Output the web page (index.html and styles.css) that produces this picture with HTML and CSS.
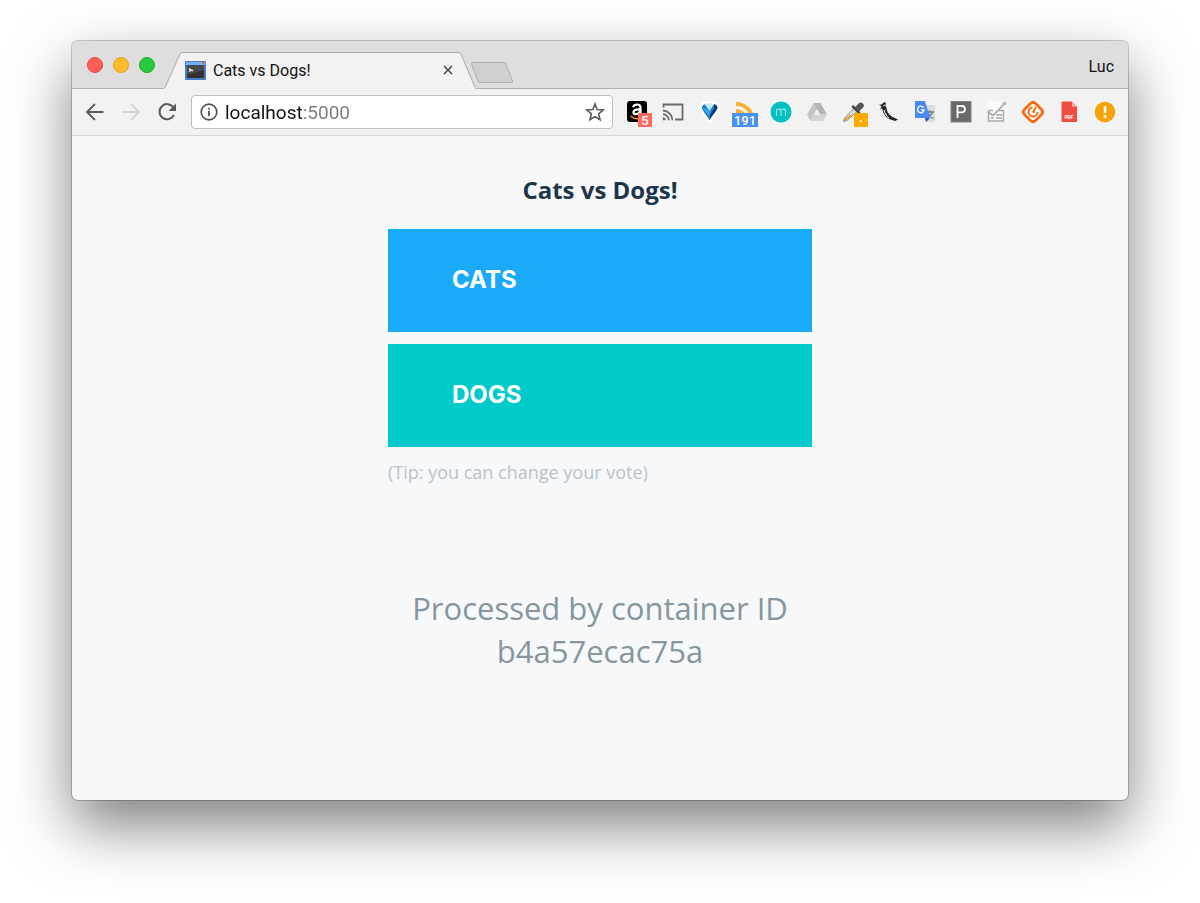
FILE: index.html
```
<!DOCTYPE html>
<html lang="en">
<head>
<meta charset="UTF-8">
<title>Cats vs Dogs!</title>
<link rel="stylesheet" href="styles.css">
</head>
<body>
<div class="window">
  <header class="tabstrip">
    <div class="lights">
      <button class="light red" aria-label="Close"></button>
      <button class="light yellow" aria-label="Minimize"></button>
      <button class="light green" aria-label="Zoom"></button>
    </div>
    <div class="tab">
      <svg class="tab-edge" width="18" height="37" viewBox="0 0 18 37"><path d="M0 37L16 2Q17 .5 18 .5V37z" fill="#f2f2f2"/><path d="M0 36.5L1 35.5L16 2Q17 .5 18 .5" fill="none" stroke="#a9a9a9"/></svg>
      <div class="tab-body">
        <svg width="21" height="19" viewBox="0 0 21 19"><rect width="21" height="19" rx="1" fill="#4b7cc9"/><rect x="1" y="1" width="19" height="3" fill="#78aef5"/><rect x="17" y="1" width="2" height="2" fill="#e8604c"/><rect x="2" y="4" width="17" height="13" fill="#303234"/><path d="M2 4h17v5L2 14z" fill="#46494b"/><path d="M4 7.500l2 1.500-2 1.500M6.500 9.500h1.500" fill="none" stroke="#fff" stroke-width="1.300"/></svg>
        <span class="tab-title">Cats vs Dogs!</span>
        <button class="tab-close" aria-label="Close tab"><svg width="10" height="10" viewBox="0 0 10 10"><path d="M1 1l8 8M9 1l-8 8" stroke="#444" stroke-width="1.500"/></svg></button>
      </div>
      <svg class="tab-edge" width="17" height="37" viewBox="0 0 17 37"><path d="M0 .5Q1 .5 2 2L17 37H0z" fill="#f2f2f2"/><path d="M0 .5Q1 .5 2 2L16 35.500Q16.500 36.500 17 36.500" fill="none" stroke="#a9a9a9"/></svg>
    </div>
    <button class="new-tab" aria-label="New tab"><svg width="44" height="22" viewBox="0 0 44 22"><path d="M2.500 .5H34Q35.500 .5 36 2L42.500 19Q43 20.500 41.500 20.500H10Q8.500 20.500 8 19L1.500 2Q1 .5 2.500 .5z" fill="#d0d0d0" stroke="#adadad"/></svg></button>
    <button class="profile">Luc</button>
  </header>

  <div class="toolbar">
    <button class="tool" aria-label="Back"><svg width="24" height="24" viewBox="0 0 24 24"><path d="M20.500 12H4.500M12 4l-8 8 8 8" fill="none" stroke="#5a5a5a" stroke-width="1.800"/></svg></button>
    <button class="tool" aria-label="Forward"><svg width="24" height="24" viewBox="0 0 24 24"><path d="M3.500 12h16M12 4l8 8-8 8" fill="none" stroke="#d2d2d2" stroke-width="1.800"/></svg></button>
    <button class="tool" aria-label="Reload"><svg width="24" height="24" viewBox="0 0 24 24"><path d="M19 15A7.600 7.600 0 1 1 18.500 7.500" fill="none" stroke="#5a5a5a" stroke-width="2"/><path d="M21 3.500v7.500h-7.500z" fill="#5a5a5a"/></svg></button>
    <div class="omnibox">
      <svg width="18" height="18" viewBox="0 0 18 18"><circle cx="9" cy="9" r="7.800" fill="none" stroke="#505050" stroke-width="1.700"/><path d="M9 7.800v5.200M9 4.700v1.800" stroke="#505050" stroke-width="1.800"/></svg>
      <input class="address" type="text" value="localhost:5000" aria-label="Address">
      <button class="star" aria-label="Bookmark"><svg width="20" height="20" viewBox="0 0 20 20"><path d="M10 2l2.200 5.600 6 .4-4.600 3.900 1.500 5.900L10 14.600l-5.100 3.200 1.500-5.900L1.800 8l6-.4z" fill="none" stroke="#5a5a5a" stroke-width="1.600"/></svg></button>
    </div>
    <button class="tool" aria-label="Amazon assistant, 5 notices">
      <svg width="24" height="24" viewBox="0 0 24 24"><rect x="2" y="1" width="20" height="21" rx="3" fill="#000"/><path d="M8 7.200Q9 4.500 12 4.500q3.500 0 3.500 3v4.500q0 1.200 1 2.200M15 9.500q-6.500-.5-6.500 2.700 0 2 2.300 2 4.200 0 4.200-4.700" fill="none" stroke="#fff" stroke-width="2.200"/><path d="M5.500 16q4 3.500 9 2.500" fill="none" stroke="#f90" stroke-width="1.500"/></svg>
      <span class="badge badge-red">5</span>
    </button>
    <button class="tool" aria-label="Cast"><svg width="24" height="24" viewBox="0 0 24 24"><path d="M2.500 7.500V4.500h19v15h-7.500" fill="none" stroke="#6a6a6a" stroke-width="1.800"/><path d="M2 10.500a10 10 0 0 1 9.500 9.800M2 14.200a6 6 0 0 1 5.800 6" fill="none" stroke="#6a6a6a" stroke-width="1.800"/><path d="M1.800 17.300a3 3 0 0 1 3 3h-3z" fill="#6a6a6a"/></svg></button>
    <button class="tool" aria-label="Gem"><svg width="24" height="24" viewBox="0 0 24 24"><path d="M7 3.500h11l3 4-7.500 13h-1.500L4 7.500z" fill="#fff" stroke="#fff" stroke-width="3.500" stroke-linejoin="round"/><path d="M5 8q0-3 3-4l5 7-.5 9.500q-1.500-3-3.500-5.500Q5.500 10 5 8z" fill="#1c74c4"/><path d="M7.500 4q5-1.500 10 0L13 11.500z" fill="#c4e8fb"/><path d="M20.500 8q0-3-3-4L13 11l-.5 9.500Q14 17.500 16 15q4-5 4.500-7z" fill="#0e3c78"/><path d="M6 7l7 4-1 5q-5-5-6-9z" fill="#35a9ec"/><path d="M13 10l3-4 1 2-4 7z" fill="#2184d0"/></svg></button>
    <button class="tool" aria-label="Feed, 191 unread">
      <svg width="24" height="24" viewBox="0 0 24 24"><path d="M3 4a17 17 0 0 1 17 17M3 11a10 10 0 0 1 10 10" fill="none" stroke="#fbb034" stroke-width="4"/></svg>
      <span class="badge badge-blue">191</span>
    </button>
    <button class="tool" aria-label="Momentum"><svg width="24" height="24" viewBox="0 0 24 24"><circle cx="12" cy="12" r="10.500" fill="#02bfc0"/><path d="M7.500 16V9.500M7.500 11q0-2 2.200-2T12 11v5M12 11q0-2 2.300-2t2.200 2v5" fill="none" stroke="#a5f0ed" stroke-width="1.100"/></svg></button>
    <button class="tool" aria-label="Drive"><svg width="24" height="24" viewBox="0 0 24 24"><path d="M8.500 3L2 14.500 5.300 21 12 9z" fill="#c5c5c5"/><path d="M8.500 3h7l6.500 11.500h-7z" fill="#b5b5b5"/><path d="M8.800 14.500H22L18.700 21H5.300z" fill="#d4d4d4"/><path d="M12 9.500l3 5H9z" fill="#f2f2f2"/></svg></button>
    <button class="tool" aria-label="Color picker">
      <svg width="24" height="24" viewBox="0 0 24 24"><path d="M13 8.500L3.500 18l-1 3.500L6 20.500l10-9z" fill="#ddd" stroke="#888"/><path d="M8.500 15l-4.500 4-.5 1.500 2-.5 6-5z" fill="#f0a020"/><path d="M12 6.500l6 6" stroke="#444" stroke-width="2.500" stroke-linecap="round"/><path d="M14 8l3.500-4q2-2 4-.3t0 4L17.500 11z" fill="#555" stroke="#4a4a4a"/></svg>
      <span class="badge badge-orange">·</span>
    </button>
    <button class="tool" aria-label="Flask"><svg width="24" height="24" viewBox="0 0 24 24"><path d="M2 4.500l2 .2L7.500 2 9 3 8.300 5.500 9.500 8q.5 8 11.500 11.500l-3 1.500Q6.500 19 5 8L3 9.500 4.500 6.500z" fill="#222"/><path d="M6 6l2-1M7 10q1 6 5 8M8.500 10l-1 .6M10 14l-1.500.6" stroke="#eee" fill="none"/></svg></button>
    <button class="tool" aria-label="Translate"><svg width="24" height="24" viewBox="0 0 24 24"><path d="M9 5h13v17H13z" fill="#dcdcdc"/><path d="M13 12h8M16.500 10v2M19.500 12q-1.500 4-5 6M15 13q2 4 5.500 5.500" fill="none" stroke="#607d8b" stroke-width="1.300"/><path d="M2 1h10l5 17H3q-1 0-1-1z" fill="#4889f4"/><path d="M12 18h5l-4 4z" fill="#3052bd"/><path d="M10.500 7.500a3.300 3.300 0 1 0 .6 2.500H8" fill="none" stroke="#fff" stroke-width="1.400"/></svg></button>
    <button class="tool" aria-label="Page ruler"><svg width="24" height="24" viewBox="0 0 24 24"><rect x="2" y="1.500" width="20" height="20.500" fill="#696969" stroke="#848484"/><path d="M8.500 18V6h4q3.500 0 3.500 3.200t-3.500 3.200h-4" fill="none" stroke="#fff" stroke-width="1.800"/></svg></button>
    <button class="tool" aria-label="Checklist"><svg width="24" height="24" viewBox="0 0 24 24"><path d="M2 1h20v21H2z" fill="#fafafa"/><path d="M3.500 10.500h4.500M14 10.500h4.500V21h-15V10.500M11 15h6M11 18h6M5.500 18h3" fill="none" stroke="#a5a5a5" stroke-width="1.500"/><path d="M2.500 11.500l5.500 4L20 3" fill="none" stroke="#aaa" stroke-width="1.800"/><circle cx="19.500" cy="3.500" r="2" fill="#bbb"/></svg></button>
    <button class="tool" aria-label="Toggl"><svg width="24" height="24" viewBox="0 0 24 24"><path d="M9.500 3.500q2.500-2.500 5 0l6 6q2.500 2.500 0 5l-6 6q-2.500 2.500-5 0l-6-6q-2.500-2.500 0-5z" fill="#fff" stroke="#f9690e" stroke-width="2.800"/><path d="M11.500 7.500a4.500 4.500 0 1 0 5 4.500" fill="none" stroke="#f9690e" stroke-width="1.900"/><path d="M14.500 6l1 1.500-2.500 6-2-1.500z" fill="#f9690e"/></svg></button>
    <button class="tool" aria-label="Save as PDF"><svg width="24" height="24" viewBox="0 0 24 24"><path d="M5.500 1.500h9.500l5 5V22h-14.500q-1 0-1-1V2.500q0-1 1-1z" fill="#f14c40"/><path d="M15 1.500l5 5h-5z" fill="#f9b5ad"/><text x="12" y="19" text-anchor="middle" class="pdf-text">PDF</text></svg></button>
    <button class="tool" aria-label="Alert"><svg width="24" height="24" viewBox="0 0 24 24"><circle cx="12" cy="12" r="10.300" fill="#f5a206"/><path d="M12 6v7M12 15v3" stroke="#fff" stroke-width="2.600"/></svg></button>
  </div>

  <main class="page">
    <form class="vote">
      <h1>Cats vs Dogs!</h1>
      <button class="choice cats" type="button">CATS</button>
      <button class="choice dogs" type="button">DOGS</button>
      <p class="tip">(Tip: you can change your vote)</p>
      <p class="host">Processed by container ID b4a57ecac75a</p>
    </form>
  </main>
</div>
</body>
</html>
```
FILE: styles.css
```
* {
  box-sizing: border-box;
}
body {
  margin: 0;
  padding: 41px 72px 103px;
  background: #fff;
  font-family: Roboto, sans-serif;
}
button {
  padding: 0;
  border: 0;
  background: none;
  font-family: inherit;
}
svg {
  display: block;
}
.window {
  display: flex;
  flex-direction: column;
  min-height: calc(100vh - 144px);
  border-radius: 6px;
  background: #f7f8fa;
  box-shadow: 0 0 0 1px rgba(0, 0, 0, 0.2), 0 26px 60px rgba(0, 0, 0, 0.5);
}

/* tabs */
.tabstrip {
  display: flex;
  align-items: flex-end;
  height: 48px;
  padding: 0 14px 0 15px;
  border-radius: 6px 6px 0 0;
  background: linear-gradient(#dedede 47px, #b0b0b0 47px);
}
.lights {
  display: flex;
  gap: 10px;
  align-self: center;
  width: 77px;
}
.light {
  width: 16px;
  height: 16px;
  border: 1px solid;
  border-radius: 50%;
}
.red {
  background: #ff5f57;
  border-color: #e2463f;
}
.yellow {
  background: #ffbd2e;
  border-color: #e1a116;
}
.green {
  background: #28c940;
  border-color: #12ac28;
}
.tab {
  display: flex;
  flex: 0 1 312px;
}
.tab-edge {
  flex: none;
}
.tab-body {
  display: flex;
  flex: 1;
  align-items: center;
  gap: 7px;
  height: 37px;
  padding: 0 6px 2px 3px;
  border-top: 1px solid #a9a9a9;
  background: #f2f2f2;
}
.tab-title {
  flex: 1;
  font-size: 16px;
  color: #111;
}
.new-tab {
  margin: 0 auto 5px -6px;
}
.profile {
  align-self: center;
  padding-top: 2px;
  font-size: 16px;
  color: #111;
}

/* toolbar */
.toolbar {
  display: flex;
  align-items: center;
  gap: 12px;
  height: 47px;
  padding: 0 11px;
  border-bottom: 1px solid #d6d6d6;
  background: #f2f2f2;
}
.tool {
  position: relative;
  flex: none;
  width: 24px;
  height: 24px;
}
.omnibox {
  display: flex;
  flex: 1;
  align-items: center;
  gap: 7px;
  min-width: 0;
  height: 34px;
  padding: 0 7px 0 8px;
  border: 1px solid #bfbfbf;
  border-radius: 4px;
  background: #fff;
}
.address {
  flex: 1;
  min-width: 0;
  padding: 0;
  border: 0;
  /* host dark, port grey */
  background: linear-gradient(to right, #111 77px, #7b7b7b 77px);
  -webkit-background-clip: text;
  background-clip: text;
  color: transparent;
  font: 19px Roboto, sans-serif;
}
.badge {
  position: absolute;
  right: -3px;
  bottom: -3px;
  width: 14px;
  height: 14px;
  color: #fff;
  font-size: 13px;
  font-weight: 500;
  line-height: 15px;
  text-align: center;
}
.badge-red {
  background: #ff6b63;
}
.badge-blue {
  right: -1px;
  width: 26px;
  background: #4a90f0;
}
.badge-orange {
  background: #ffab00;
  font-weight: bold;
}
.pdf-text {
  fill: #fff;
  font: bold 5px Roboto, sans-serif;
}

/* voting page */
.page {
  flex: 1;
  padding: 37px 20px;
  font-family: "Open Sans", sans-serif;
}
.vote {
  display: flex;
  flex-direction: column;
  max-width: 424px;
  margin: 0 auto;
}
h1 {
  margin: 0 0 22px;
  color: #1d3549;
  font-size: 24px;
  line-height: 34px;
  text-align: center;
}
.choice {
  height: 103px;
  margin-bottom: 12px;
  padding: 0 0 2px 64px;
  color: #fff;
  font: bold 24px Inter, sans-serif;
  text-align: left;
}
.cats {
  background: #1aaaf8;
}
.dogs {
  background: #00cbca;
}
.tip {
  margin: 0;
  color: #b8c3c9;
  font-size: 18px;
  line-height: 26px;
}
.host {
  margin: 102px 0 0;
  color: #8596a0;
  font-size: 31px;
  line-height: 43px;
  text-align: center;
}
```
